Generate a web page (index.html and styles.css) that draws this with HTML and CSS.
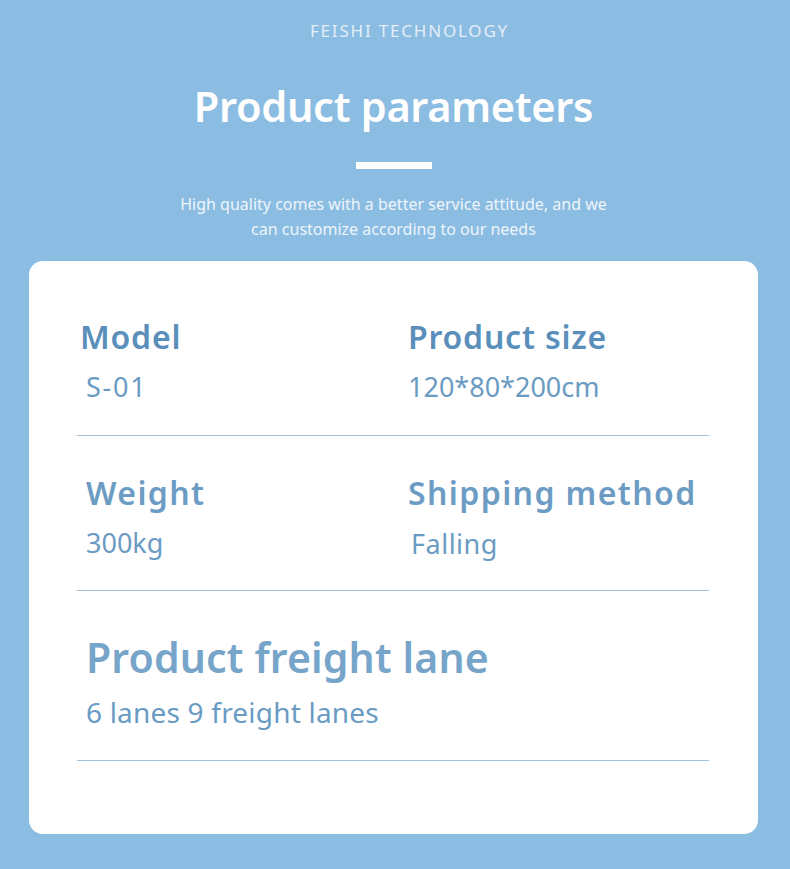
FILE: index.html
```html
<!DOCTYPE html>
<html lang="en">
<head>
<meta charset="utf-8">
<title>Product parameters</title>
<link rel="stylesheet" href="styles.css">
</head>
<body>
<div class="page">
  <header class="hero">
    <div class="brand">FEISHI TECHNOLOGY</div>
    <h1 class="title">Product parameters</h1>
    <div class="bar"></div>
    <p class="sub">High quality comes with a better service attitude, and we<br>can customize according to our needs</p>
  </header>
  <section class="card">
    <div class="row two r1">
      <div class="cell first">
        <div class="label l1">Model</div>
        <div class="value v-model">S-01</div>
      </div>
      <div class="cell">
        <div class="label l1">Product size</div>
        <div class="value">120*80*200cm</div>
      </div>
    </div>
    <div class="row two r2">
      <div class="cell shift">
        <div class="label l2">Weight</div>
        <div class="value">300kg</div>
      </div>
      <div class="cell">
        <div class="label l2">Shipping method</div>
        <div class="value v-fall">Falling</div>
      </div>
    </div>
    <div class="row r3">
      <div class="cell shift">
        <div class="label l3">Product freight lane</div>
        <div class="value big">6 lanes 9 freight lanes</div>
      </div>
    </div>
  </section>
</div>
</body>
</html>
```
FILE: styles.css
```css
* { box-sizing: border-box; }
html, body { margin: 0; padding: 0; }
body {
  background: #8bbce2;
  font-family: "Noto Sans", "Open Sans", sans-serif;
  width: 790px;
  height: 869px;
  overflow: hidden;
}
.page {
  padding: 20px 32px 0 29px;
}
.hero {
  display: flex;
  flex-direction: column;
  align-items: center;
  text-align: center;
}
.brand {
  color: #e3eef8;
  font-size: 17px;
  letter-spacing: 1.8px;
  line-height: 22px;
  padding-left: 32px;
}
.title {
  margin: 40px 0 0 0;
  color: #ffffff;
  font-size: 41.5px;
  font-weight: 600;
  line-height: 48px;
  letter-spacing: -0.3px;
}
.bar {
  width: 76px;
  height: 7px;
  background: #ffffff;
  margin-top: 32px;
}
.sub {
  margin: 23px 0 0 0;
  color: #eef5fb;
  font-size: 16px;
  line-height: 25px;
}
.card {
  margin-top: 19px;
  background: #ffffff;
  border-radius: 14px;
  height: 573px;
  padding: 40px 49px 0 48px;
}
.row {
  border-bottom: 1.5px solid #9fc1dc;
}
.two {
  display: grid;
  grid-template-columns: 331px 1fr;
  height: 135px;
}
.r1 { padding-top: 16px; }
.r2 {
  height: 155px;
  padding-top: 37px;
}
.r3 {
  height: 170px;
  padding-top: 40px;
}
.cell {
  display: flex;
  flex-direction: column;
}
.first { padding-left: 3px; }
.shift { padding-left: 9px; }
.label {
  font-weight: 600;
  line-height: 40px;
  letter-spacing: 0.8px;
}
.l1 { color: #5a8fbb; font-size: 32px; }
.l2 { color: #6c9cc4; font-size: 32px; letter-spacing: 1.4px; }
.l3 { color: #77a4c9; font-size: 41px; line-height: 52px; letter-spacing: 0.15px; }
.value {
  color: #6a9bc3;
  font-size: 27px;
  line-height: 36px;
  margin-top: 12px;
}
.r2 .value { margin-top: 12px; }
.v-model { padding-left: 6px; letter-spacing: 1.8px; }
.r2 .v-fall { padding-left: 3px; margin-top: 13px; letter-spacing: 0.5px; }
.big { font-size: 28px; margin-top: 11px; letter-spacing: 0.2px; }
```
